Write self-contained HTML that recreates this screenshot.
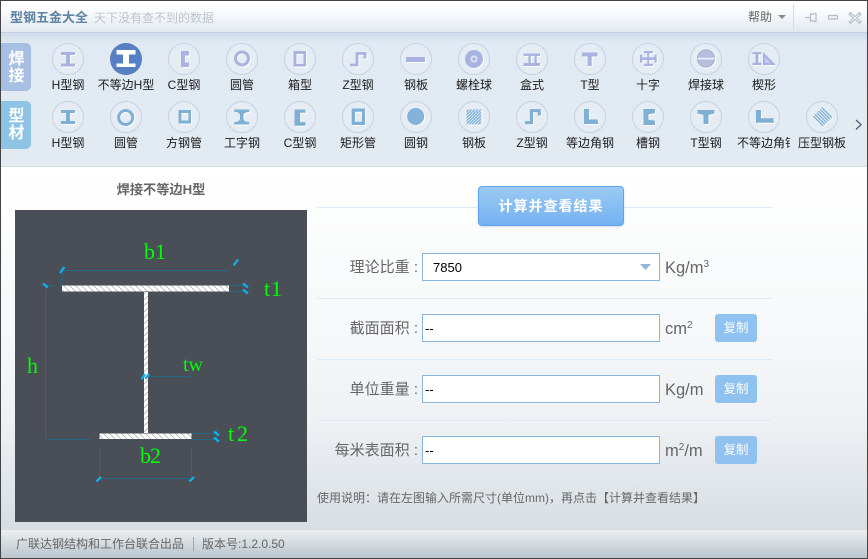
<!DOCTYPE html>
<html><head><meta charset="utf-8"><style>
*{box-sizing:border-box}
html,body{margin:0;padding:0;width:868px;height:559px;overflow:hidden;background:#fff}
body{font-family:"Liberation Sans","Noto Sans CJK SC",sans-serif;position:relative}
div{position:absolute;white-space:nowrap}
#title{left:0;top:0;width:868px;height:33px;background:linear-gradient(#fff 0,#fbfcfd 30%,#e3e9f1 100%);border-bottom:1px solid #bfcfe2}
#tool{left:0;top:33px;width:868px;height:134px;background:linear-gradient(#cfdcec 0,#e1e9f2 10px,#e2eaf2 100%);border-bottom:1px solid #d4dae0}
#main{left:0;top:167px;width:868px;height:363px;background:linear-gradient(#fff 0,#f6f8f9 45%,#eef1f4 70%,#d7dee3 100%)}
#foot{left:0;top:530px;width:868px;height:29px;background:linear-gradient(#eceff0,#b9c4cd)}
.tab{left:1px;width:30px;height:48px;border-radius:0 5px 5px 0;color:#fff;font-weight:bold;font-size:16px;line-height:17px;text-align:center;padding:8px 0 0 1px;white-space:normal}
.l{width:70px;text-align:center;font-size:12px;line-height:16px;color:#1c1c1c;height:16px}
.fl{width:120px;text-align:right;font-size:15px;line-height:20px;color:#666;left:298px}
.in{left:422px;width:238px;height:28px;border:1px solid #87b6dd;background:#fff;font-size:13px;line-height:27px;color:#000;padding-left:2px}
.u{left:665px;font-size:16.500px;line-height:20px;color:#666}
.u sup{font-size:10px;line-height:0;vertical-align:6px}
.cp{left:715px;width:42px;height:28px;background:#8fc2ef;border-radius:3px;color:#fff;font-size:12.500px;line-height:28px;text-align:center}
.ln{left:317px;width:455px;height:1px;background:#dcebf6}
.t{font-family:"Liberation Serif",serif;fill:#0f0;font-size:22px}
.ic{filter:drop-shadow(1px 1px 0 #fff)}
</style></head><body>
<div id="title"></div>
<div id="tool"></div>
<div id="main"></div>
<div id="foot"></div>

<div style="left:10px;top:9px;font-size:13px;line-height:18px;font-weight:bold;color:#5d82a3">型钢五金大全</div>
<div style="left:94px;top:9px;font-size:12px;line-height:18px;color:#bcc4cc">天下没有查不到的数据</div>
<div style="left:748px;top:9px;font-size:12px;line-height:17px;color:#666">帮助</div>

<svg style="position:absolute;left:0;top:0" width="868" height="170" viewBox="0 0 868 170">
<path d="M778 15h8l-4 4z" fill="#8a8a8a"/>
<path d="M793.500 5v25" stroke="#d5dbe3"/>
<path d="M805 17.500h5.500M810.500 13v9M810.500 14.500l5.500-1v8l-5.500-1" fill="none" stroke="#b4c0c9" stroke-width="1.200"/>
<rect x="828.500" y="15.500" width="9" height="3.500" rx="1" fill="#eef1f5" stroke="#b0bcc6" stroke-width="1.200"/>
<path d="M850.500 14l9 8M859.500 14l-9 8" stroke="#b5c0c8" stroke-width="3.200" stroke-linecap="square"/>
<path d="M850.500 14l9 8M859.500 14l-9 8" stroke="#eef2f5" stroke-width="1"/>

<defs>
<pattern id="dots" width="3" height="3" patternUnits="userSpaceOnUse"><rect width="3" height="3" fill="#8ebde0"/><rect width="1" height="1" fill="#d9e8f4"/><rect x="2" y="1" width="1" height="1" fill="#c0dbef"/><rect x="1" y="2" width="1" height="1" fill="#e4eff8"/></pattern>
</defs>

<g fill="#e5ecf4" stroke="#c6d1e3" stroke-width="1">
<circle cx="68" cy="59" r="15.500"/><circle cx="126" cy="59" r="16" fill="#5680c3" stroke="none"/><circle cx="184" cy="59" r="15.500"/><circle cx="242" cy="59" r="15.500"/><circle cx="300" cy="59" r="15.500"/><circle cx="358" cy="59" r="15.500"/><circle cx="416" cy="59" r="15.500"/><circle cx="474" cy="59" r="15.500"/><circle cx="532" cy="59" r="15.500"/><circle cx="590" cy="59" r="15.500"/><circle cx="648" cy="59" r="15.500"/><circle cx="706" cy="59" r="15.500"/><circle cx="764" cy="59" r="15.500"/>
<circle cx="68" cy="117" r="15.500"/><circle cx="126" cy="117" r="15.500"/><circle cx="184" cy="117" r="15.500"/><circle cx="242" cy="117" r="15.500"/><circle cx="300" cy="117" r="15.500"/><circle cx="358" cy="117" r="15.500"/><circle cx="416" cy="117" r="15.500"/><circle cx="474" cy="117" r="15.500"/><circle cx="532" cy="117" r="15.500"/><circle cx="590" cy="117" r="15.500"/><circle cx="648" cy="117" r="15.500"/><circle cx="706" cy="117" r="15.500"/><circle cx="764" cy="117" r="15.500"/><circle cx="822" cy="117" r="15.500"/>
</g>

<path d="M116.500 50h19v4.500h-6.500v9h6.500v3.500h-19v-3.500h6.500v-9h-6.500z" fill="#fff"/>

<g class="ic" fill="#a9b3e2">
<path d="M61 52h14v3h-5v8.500h5v3h-14v-3h5v-8.500h-5z"/>
<path d="M181 51h8v4.500h-4v7h4v4.500h-8z"/>
<circle cx="242" cy="58.500" r="6.500" fill="none" stroke="#a9b3e2" stroke-width="3"/>
<path d="M293.500 51h12.500v15.500h-12.500zM296.500 54v10h7v-10z" fill-rule="evenodd"/>
<path d="M350 65h7v-11.500h8v5" fill="none" stroke="#a9b3e2" stroke-width="2.800"/>
<rect x="406" y="57" width="19" height="5"/>
<circle cx="474" cy="59" r="9"/><circle cx="474" cy="59" r="3.500" fill="#dfe6f3"/><circle cx="474" cy="59" r="1.800" fill="#a9b3e2"/>
<path d="M523.500 53.500h16.500v2.500h-16.500zM523.500 63h16.500v3h-16.500zM528.500 56h2.300v7h-2.300zM534.500 56h2.300v7h-2.300z"/>
<path d="M582 52.500h15.500v4h-5.800v9.500h-4v-9.500h-5.700z"/>
<path d="M644 51h9v2.300h-3.700v4h5.200v-2.600h2.200v8h-2.200v-2.600h-5.200v3.600h3.700v2.300h-9v-2.300h3.300v-3.600h-5.100v2.600h-2.200v-8h2.200v2.600h5.100v-4h-3.300z"/>
<circle cx="706" cy="58.500" r="8.500" fill="#b7bfe0" stroke="#a2abca"/><rect x="697.500" y="57.800" width="17" height="1.600" fill="#eef2f7"/>
<path d="M752.500 52h9v2.300h-3v8.400h3v2.300h-9v-2.300h3v-8.400h-3z"/>
<path d="M763 52l13 13h-13z" fill="#a9b3e2"/><path d="M765 57l5.500 6h-5.500z" fill="#c5cded"/>
</g>

<g class="ic" fill="#7eb0d5">
<path d="M61 110h14v3h-5v8h5v3h-14v-3h5v-8h-5z"/>
<circle cx="125.700" cy="117.500" r="7" fill="none" stroke="#7eb0d5" stroke-width="3"/>
<path d="M178.500 110h12.500v13.500h-12.500zM181.500 113v7.500h7v-7.500z" fill-rule="evenodd"/>
<path d="M234 109.500h15.500l-.500 2.500c-3.500.200-5 1-5.500 3v4c.500 2 2 2.800 5.500 3l.500 2.500h-15.500l.500-2.500c3.500-.200 5-1 5.500-3v-4c-.500-2-2-2.800-5.500-3z"/>
<path d="M294.500 109.500h11v3.300h-5.300v9.300h5.300v3.700h-11z"/>
<path d="M351.700 108.500h13.300v16.500h-13.300zM355 111.700v10h7v-10z" fill-rule="evenodd"/>
<circle cx="415.700" cy="116.500" r="8.500" fill="#84b3d9"/>
<rect x="466.500" y="109.500" width="15" height="15" fill="url(#dots)"/>
<path d="M525 122.700h6.500v-12h7.800v4.800" fill="none" stroke="#7eb0d5" stroke-width="3.200"/>
<path d="M584 109h5v10.500h8.500l1 4.500h-14.500z"/>
<path d="M643.500 109h11.500v4.300l-6.500 1v5.400l6.500 1v4.300h-11.500z"/>
<path d="M697.500 110h17v3.500l-6 1.500v9h-5v-9l-6-1.500z"/>
<path d="M756 110h5v8.300h12.500l.500 4.400h-18z"/>
<g transform="rotate(45 822 117.500)" fill="#7eb0d5"><rect x="815" y="110" width="14" height="1.300"/><rect x="815" y="112.400" width="14" height="1.300"/><rect x="815" y="114.800" width="14" height="1.300"/><rect x="815" y="117.200" width="14" height="1.300"/><rect x="815" y="119.600" width="14" height="1.300"/><rect x="815" y="122" width="14" height="1.300"/></g>
</g>
<path d="M856 120l5 4.700-5 4.700" fill="none" stroke="#4d5d74" stroke-width="1.300"/>
</svg>

<div class="tab" style="top:43px;background:#a7bfe3">焊<br>接</div>
<div class="tab" style="top:101px;background:#8ec3e4;padding-top:7px">型<br>材</div>

<div class="l" style="left:33px;top:77px">H型钢</div>
<div class="l" style="left:91px;top:77px">不等边H型</div>
<div class="l" style="left:149px;top:77px">C型钢</div>
<div class="l" style="left:207px;top:77px">圆管</div>
<div class="l" style="left:265px;top:77px">箱型</div>
<div class="l" style="left:323px;top:77px">Z型钢</div>
<div class="l" style="left:381px;top:77px">钢板</div>
<div class="l" style="left:439px;top:77px">螺栓球</div>
<div class="l" style="left:497px;top:77px">盒式</div>
<div class="l" style="left:555px;top:77px">T型</div>
<div class="l" style="left:613px;top:77px">十字</div>
<div class="l" style="left:671px;top:77px">焊接球</div>
<div class="l" style="left:729px;top:77px">楔形</div>

<div class="l" style="left:33px;top:135px">H型钢</div>
<div class="l" style="left:91px;top:135px">圆管</div>
<div class="l" style="left:149px;top:135px">方钢管</div>
<div class="l" style="left:207px;top:135px">工字钢</div>
<div class="l" style="left:265px;top:135px">C型钢</div>
<div class="l" style="left:323px;top:135px">矩形管</div>
<div class="l" style="left:381px;top:135px">圆钢</div>
<div class="l" style="left:439px;top:135px">钢板</div>
<div class="l" style="left:497px;top:135px">Z型钢</div>
<div class="l" style="left:555px;top:135px">等边角钢</div>
<div class="l" style="left:613px;top:135px">槽钢</div>
<div class="l" style="left:671px;top:135px">T型钢</div>
<div class="l" style="left:737px;top:135px;width:53px;text-align:left;overflow:hidden">不等边角钢</div>
<div class="l" style="left:787px;top:135px">压型钢板</div>

<div style="left:15px;top:181px;width:292px;text-align:center;font-size:13.200px;line-height:18px;font-weight:bold;color:#666">焊接不等边H型</div>

<svg style="position:absolute;left:15px;top:210px" width="292" height="312" viewBox="15 210 292 312">
<defs>
<pattern id="h" width="6" height="6" patternUnits="userSpaceOnUse"><rect width="6" height="6" fill="#fff"/><path d="M0 0l6 6" stroke="#b5b5b5" stroke-width=".800"/></pattern>
<pattern id="h2" width="6" height="6" patternUnits="userSpaceOnUse"><rect width="6" height="6" fill="#fff"/><path d="M0 6l6-6" stroke="#b5b5b5" stroke-width=".800"/></pattern>
</defs>
<rect x="15" y="210" width="292" height="312" fill="#4a4e57"/>
<g stroke="#236a84" stroke-width="1" fill="none">
<path d="M62 270.500h167M62 266v19M45.500 285.500v154M46 285.500h10M46 439.500h44M229 285.500h16M229 291.500h16M192 433.500h24M192 439.500h24M99.500 448v30M191.500 448v30M99.500 478.500h92M145 376.500h46M245.500 280v16M216.500 429v14"/>
</g>
<rect x="62" y="285.500" width="167" height="6" fill="url(#h)"/>
<rect x="144" y="292" width="4" height="141" fill="url(#h2)"/>
<rect x="99.500" y="433.500" width="92" height="5.500" fill="url(#h)"/>
<g stroke="#0fb2ee" stroke-width="2.200">
<path d="M60 273l4.500-6M233.500 265.500l4.500-6M43 283.500l5 4M243 283.500l5 4M243 289.500l5 4M214 431.500l5 4M214 437.500l5 4M96.500 481.500l4.500-4.500M189.500 481.500l4.500-4.500M141.500 379l3.500-5M145.500 379l3.500-5"/>
</g>
<text class="t" x="144 155" y="259">b1</text>
<text class="t" x="264 271" y="296">t1</text>
<text class="t" x="27" y="373">h</text>
<text class="t" x="183 188.500" y="371" style="font-size:20px">tw</text>
<text class="t" x="228 237" y="441">t2</text>
<text class="t" x="140 150" y="463">b2</text>
</svg>

<div class="ln" style="top:207px"></div>
<div class="ln" style="top:298px"></div>
<div class="ln" style="top:359px"></div>
<div class="ln" style="top:420px"></div>
<div class="ln" style="top:481px"></div>

<div style="left:478px;top:186px;width:146px;height:40px;background:linear-gradient(#9ccbf3,#74b1f2);border:1px solid #5ca5ee;border-radius:4px;color:#fff;font-size:14px;font-weight:bold;letter-spacing:1px;line-height:38px;text-align:center;box-shadow:0 1px 2px rgba(120,150,180,.3)">计算并查看结果</div>

<div class="fl" style="top:258px">理论比重 :</div>
<div class="in" style="top:253px;padding-left:10px">7850</div>
<svg style="position:absolute;left:640px;top:264px" width="12" height="7"><path d="M0 0h11l-5.500 6z" fill="#8fb8da"/></svg>
<div class="u" style="top:258px">Kg/m<sup>3</sup></div>

<div class="fl" style="top:319px">截面面积 :</div>
<div class="in" style="top:314px">--</div>
<div class="u" style="top:319px">cm<sup>2</sup></div>
<div class="cp" style="top:314px">复制</div>

<div class="fl" style="top:380px">单位重量 :</div>
<div class="in" style="top:375px">--</div>
<div class="u" style="top:380px">Kg/m</div>
<div class="cp" style="top:375px">复制</div>

<div class="fl" style="top:441px">每米表面积 :</div>
<div class="in" style="top:436px">--</div>
<div class="u" style="top:441px">m<sup>2</sup>/m</div>
<div class="cp" style="top:436px">复制</div>

<div style="left:317px;top:490px;font-size:12px;line-height:17px;color:#666">使用说明：请在左图输入所需尺寸(单位mm)，再点击【计算并查看结果】</div>

<div style="left:16px;top:536px;font-size:12px;line-height:17px;color:#666">广联达钢结构和工作台联合出品</div>
<div style="left:193px;top:537px;width:1px;height:14px;background:#9aa5ae"></div>
<div style="left:202px;top:536px;font-size:12px;line-height:17px;color:#666">版本号:1.2.0.50</div>

<div style="left:0;top:0;width:868px;height:559px;border:1px solid #444;pointer-events:none"></div>
</body></html>
